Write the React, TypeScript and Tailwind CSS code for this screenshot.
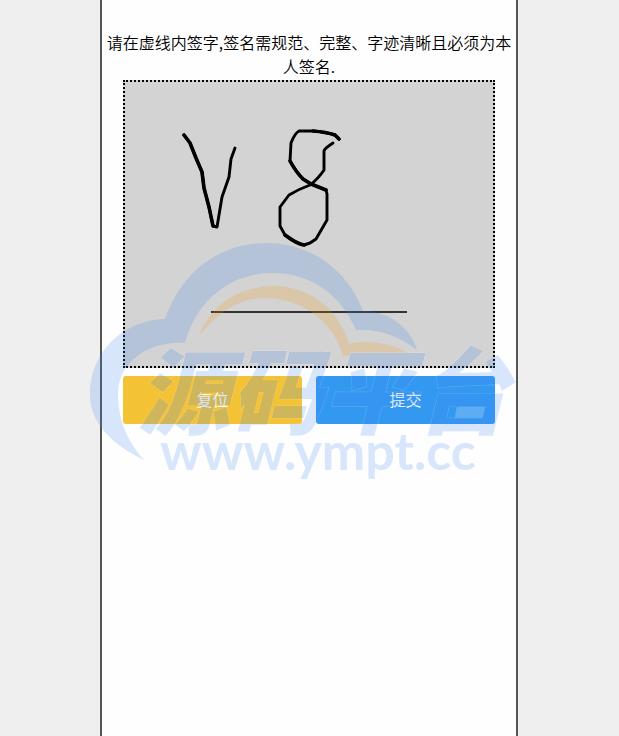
const SIGNATURE_STROKES = [
  "M184 135L190 143L196 158L202 172L204 188L209 207L213 226L217 227L219 215L222 197L229 177L231 159L235 148",
  "M339 139L335 135Q326 132 313 131L299 131Q295 133 291 143L290 161Q296 172 303 179L311 184L326 190L327 194L327 220L316 239L310 243L304 245Q297 244 285 235L280 226L280 207L289 195Q299 189 310 185Q318 179 324 170L324 151Q325 148 333 143",
];

function SignaturePad() {
  return (
    <div className="border-2 border-dotted border-black bg-[#d3d3d3]">
      <svg viewBox="125 82 368 284" className="block w-full" role="img" aria-label="签名">
        <g fill="none" stroke="#000" strokeLinecap="round" strokeLinejoin="round">
          {SIGNATURE_STROKES.map((d) => (
            <path key={d} d={d} strokeWidth="2.9" />
          ))}
          <path
            d="M184 135L190 143L196 158L202 172L204 188L209 207L213 226M339 139L335 135Q326 132 313 131M290 161Q296 172 303 179L311 184L326 190M304 245Q297 244 285 235"
            strokeWidth="3.6"
          />
        </g>
        <path d="M211 312H407" stroke="#333" strokeWidth="2" />
      </svg>
    </div>
  );
}

function Watermark() {
  return (
    <svg
      viewBox="80 230 450 270"
      className="pointer-events-none absolute top-[230px] left-1/2 h-[270px] w-[450px] -translate-x-[229px]"
      aria-hidden="true"
    >
      <g opacity="0.2">
        <path
          fill="#4088f0"
          d="M144 460C107 442 90 420 90 394C90 352 123 320 165 319C181 273 218 243 267 243C310 243 347 269 363 311C389 311 411 328 417 350C400 337 382 329 356 330C341 295 311 273 273 273C230 273 196 301 185 343C147 341 118 363 118 394C118 420 127 441 144 460Z"
        />
        <path
          fill="#fa9600"
          d="M199 336C210 305 240 286 273 286C309 286 339 309 349 344C372 339 394 344 413 356C391 351 366 353 343 356C333 319 300 298 264 298C237 298 216 315 199 336Z"
        />
        <path fill="#fff" d="M457 406H495L493 421H454Z" />
        <g fill="#4088f0" stroke="#fff" strokeWidth="1" paintOrder="stroke">
          <text
            x="137"
            y="427"
            className="font-['Noto_Sans_CJK_SC',sans-serif] text-[93px] font-black italic"
          >
            源码平台
          </text>
          <text x="160" y="470" className="font-[Lato,sans-serif] text-[52px] font-bold">
            www.ympt.cc
          </text>
        </g>
      </g>
    </svg>
  );
}

export default function App() {
  return (
    <div className="min-h-screen bg-[#efefef] pr-px font-['Noto_Sans_CJK_SC',sans-serif]">
      <main className="relative mx-auto min-h-screen w-full max-w-[418px] border-x-2 border-[#555] bg-[#fefefe] pt-[30px]">
        <p className="mb-0.5 text-center text-base leading-6 font-[350] text-black">
          请在虚线内签字,签名需规范、完整、字迹清晰且必须为本人签名.
        </p>
        <div className="px-[21px]">
          <SignaturePad />
          <div className="mt-2 grid grid-cols-2 gap-3.5">
            <button type="button" className="h-12 rounded-[3px] bg-[#f4c235] pb-0.5 text-base text-white">
              复位
            </button>
            <button type="button" className="h-12 rounded-[3px] bg-[#3399f0] pb-0.5 text-base text-white">
              提交
            </button>
          </div>
        </div>
        <Watermark />
      </main>
    </div>
  );
}
